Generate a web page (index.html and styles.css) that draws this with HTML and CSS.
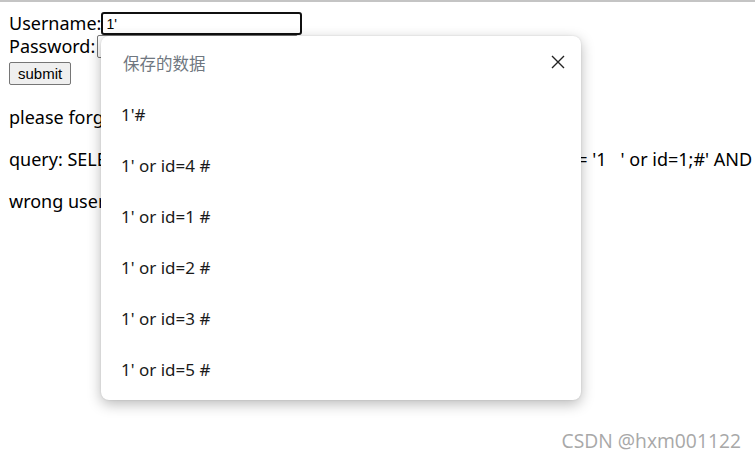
FILE: index.html
```html
<!DOCTYPE html>
<html lang="en">
<head>
    <meta charset="UTF-8">
    <meta name="viewport" content="width=device-width, initial-scale=1.0">
    <title>Login</title>
    <link rel="stylesheet" href="styles.css">
</head>
<body>
    <div class="top-bar"></div>
    <div class="page">
        <form class="login-form">
            <div class="form-row">
                <label>Username:</label><input type="text" class="field field-active" value="1'">
            </div>
            <div class="form-row">
                <label>Password:</label><input type="password" class="field">
            </div>
            <button type="button" class="submit-btn">submit</button>
        </form>
        <p>please forget about the flag, just login</p>
        <p>query: SELECT * FROM users WHERE password = '1' AND username = '1&nbsp;&nbsp;&nbsp;' or id=1;#' AND password = '1'</p>
        <p>wrong username or password</p>
    </div>

    <div class="saved-popup">
        <div class="popup-header">
            <span class="popup-title">保存的数据</span>
            <span class="popup-close">
                <svg width="14" height="14" viewBox="0 0 14 14">
                    <path d="M1 1 L13 13 M13 1 L1 13" stroke="#222" stroke-width="1.4" fill="none"/>
                </svg>
            </span>
        </div>
        <ul class="popup-list">
            <li>1'#</li>
            <li>1' or id=4 #</li>
            <li>1' or id=1 #</li>
            <li>1' or id=2 #</li>
            <li>1' or id=3 #</li>
            <li>1' or id=5 #</li>
        </ul>
    </div>

    <div class="watermark">CSDN @hxm001122</div>
</body>
</html>
```

FILE: styles.css
```css
body {
    margin: 0;
    font-family: 'Noto Sans', 'Noto Sans CJK SC', sans-serif;
    font-size: 18px;
    color: #000;
    background-color: #fff;
    overflow: hidden;
    height: 461px;
    position: relative;
}
.top-bar {
    height: 2px;
    background-color: #c4c4c4;
}
.page {
    padding: 10px 9px;
    white-space: nowrap;
    overflow: hidden;
}
.login-form {
    line-height: 23px;
}
.form-row {
    display: flex;
    align-items: center;
    height: 23px;
}
.field {
    box-sizing: border-box;
    height: 23px;
    width: 201px;
    margin: 0;
    padding: 1px 3px;
    font-family: 'Liberation Sans', Arial, sans-serif;
    font-size: 14px;
    border: 1px solid #767676;
    border-radius: 2px;
}
.field-active {
    border: 2px solid #101010;
    border-radius: 3px;
    outline: none;
}
.form-row:nth-child(2) .field {
    margin-left: 2px;
}
.submit-btn {
    margin-top: 4px;
    height: 23px;
    padding: 0 8px;
    font-family: 'Liberation Sans', Arial, sans-serif;
    font-size: 15px;
    color: #000;
    background-color: #efefef;
    border: 1px solid #767676;
    border-radius: 2px;
}
.page p {
    margin: 18px 0 0;
    line-height: 24px;
}
.page p:first-of-type {
    margin-top: 20px;
}
.saved-popup {
    position: absolute;
    left: 101px;
    top: 36px;
    width: 480px;
    height: 364px;
    background-color: #fff;
    border-radius: 8px;
    box-shadow: 0 4px 14px rgba(0, 0, 0, 0.28), 0 0 2px rgba(0, 0, 0, 0.12);
}
.popup-header {
    display: flex;
    justify-content: space-between;
    align-items: center;
    height: 53px;
    padding: 0 16px 0 22px;
}
.popup-title {
    font-size: 16.5px;
    color: #6f7780;
}
.popup-close {
    display: flex;
    margin-top: -1px;
}
.popup-list {
    list-style: none;
    margin: 0;
    padding: 0 0 0 20px;
}
.popup-list li {
    height: 51px;
    line-height: 51px;
    font-size: 17px;
    color: #1a1a1a;
}
.watermark {
    position: absolute;
    right: 14px;
    bottom: 7px;
    font-family: 'Open Sans', sans-serif;
    font-size: 19.3px;
    color: #a8a8a8;
    text-shadow: 0 0 2px #fff;
}
```
